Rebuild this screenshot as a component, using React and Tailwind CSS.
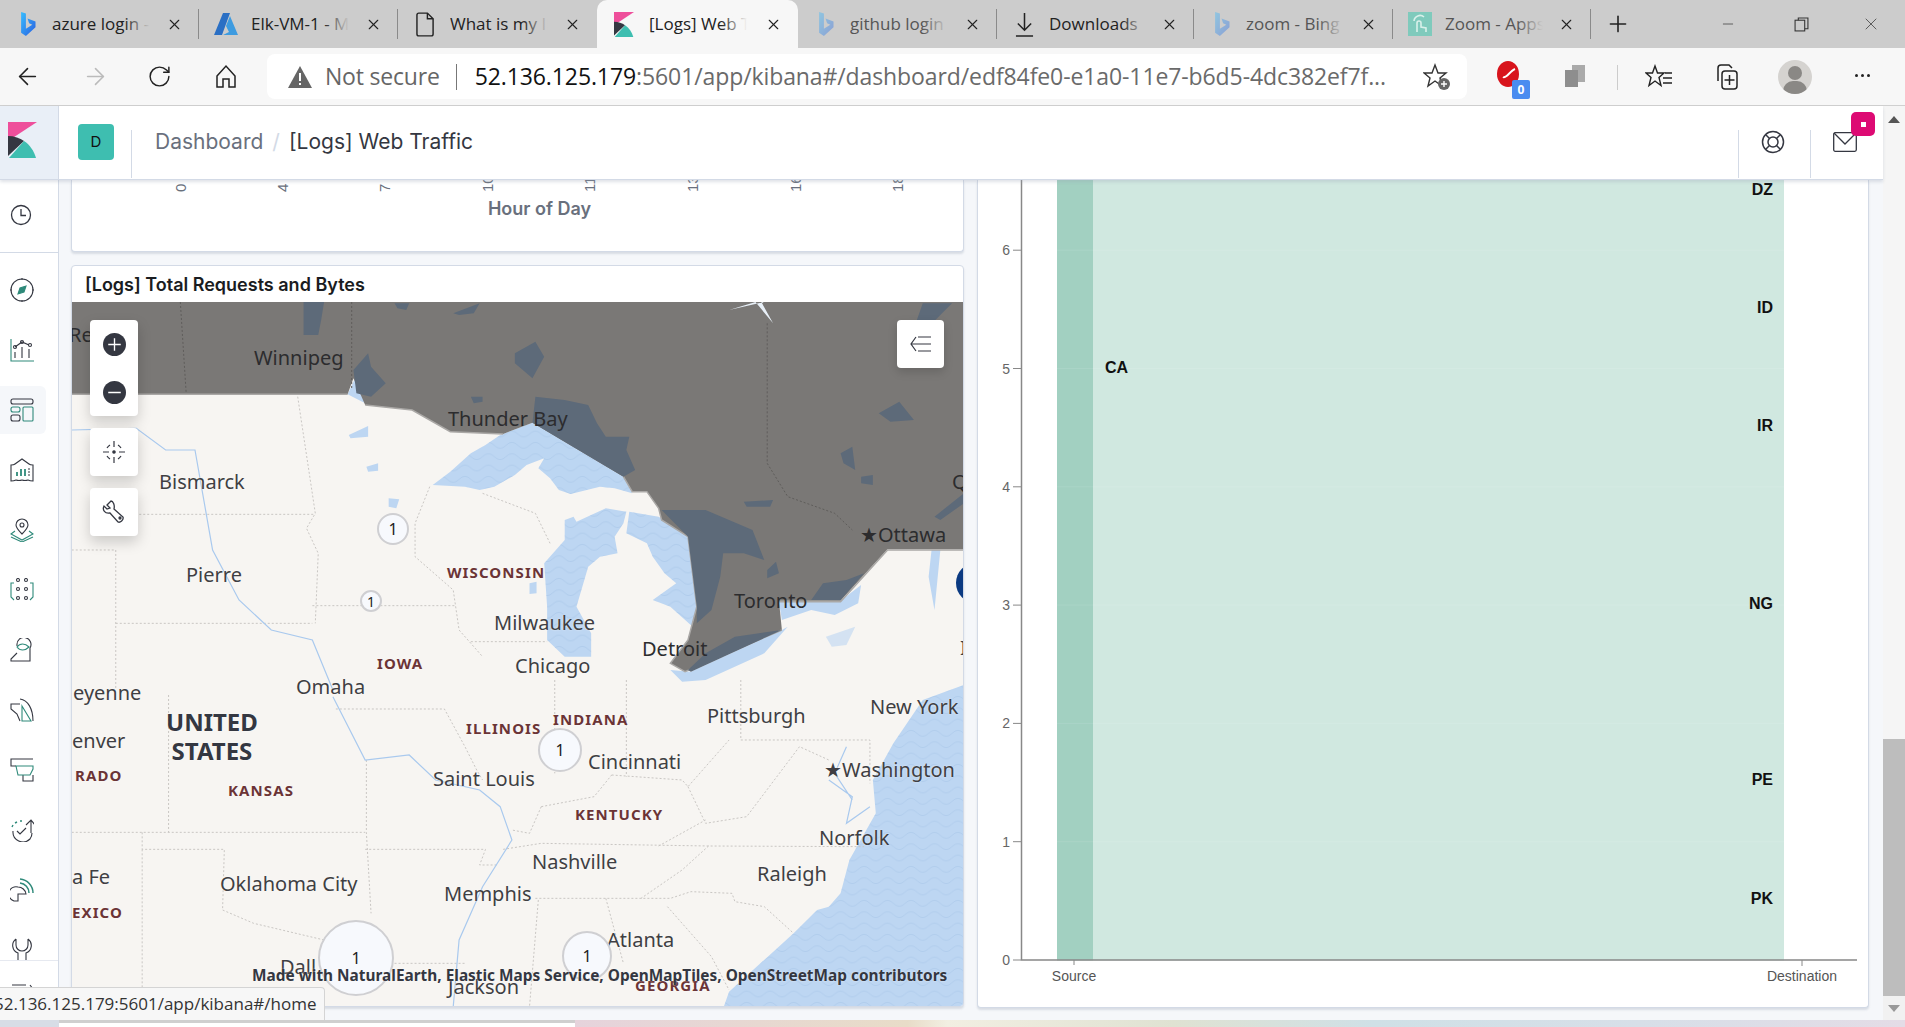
import React from "react";
import { ArrowLeft, ArrowRight, RotateCw, X, Plus, Minus } from "lucide-react";

const Bing = ({ dim }) => (
  <svg viewBox="0 0 20 30" className={"w-[17px] h-[24px] " + (dim ? "opacity-40" : "")}>
    <defs>
      <linearGradient id="bingg" x1="0" y1="0" x2="1" y2="1">
        <stop offset="0" stopColor="#37bdff" />
        <stop offset="1" stopColor="#2a5fe0" />
      </linearGradient>
    </defs>
    <path d="M2 0l6 2v19l8-5-4-2-2-6 10 4v7L8 30l-6-4z" fill="url(#bingg)" />
  </svg>
);
const Azure = () => (
  <svg viewBox="0 0 24 22" className="w-[24px] h-[22px]">
    <path d="M9 0h7L8 22H0z" fill="#2a6fc4" />
    <path d="M16 3l8 19H9l6-3-3-6z" fill="#3d9be0" />
  </svg>
);
const Doc = () => (
  <svg viewBox="0 0 20 26" className="w-[19px] h-[25px]" fill="none" stroke="#222" strokeWidth="1.5">
    <path d="M3 1h9l6 6v16a2 2 0 0 1-2 2H3a2 2 0 0 1-2-2V3a2 2 0 0 1 2-2z" />
    <path d="M12 1v6h6" />
  </svg>
);
const KibanaLogo = ({ cls }) => (
  <svg viewBox="0 0 29 36" className={cls}>
    <path d="M0 0h29L0 19z" fill="#ee4f9b" />
    <path d="M0 14c6 0 12 2 16 5L0 34z" fill="#343741" />
    <path d="M1 36l15-17c6 4 10 10 12 17z" fill="#3ebeb0" />
  </svg>
);
const Download = () => (
  <svg viewBox="0 0 20 26" className="w-[19px] h-[25px]" fill="none" stroke="#222" strokeWidth="1.6">
    <path d="M10 1v18M3 12l7 7 7-7M1 25h18" />
  </svg>
);
const ZoomTile = () => (
  <svg viewBox="0 0 24 24" className="w-[24px] h-[24px]">
    <rect width="24" height="24" fill="#7fcabc" />
    <path d="M9 20v-9a2 2 0 0 1 4 0v4l5 1v4M6 9a6 6 0 0 1 10-4" fill="none" stroke="#d9f0ea" strokeWidth="1.6" />
  </svg>
);

const tabs = [
  { icon: <Bing />, t: "azure login - Search", c: "text-[#222]", w: "w-[199px]" },
  { icon: <Azure />, t: "Elk-VM-1 - Microsoft", c: "text-[#222]", w: "w-[199px]" },
  { icon: <Doc />, t: "What is my IP address", c: "text-[#222]", w: "w-[199px]" },
  { icon: <KibanaLogo cls="w-[20px] h-[25px]" />, t: "[Logs] Web Traffic", c: "text-[#222]", w: "w-[201px]", active: true },
  { icon: <Bing dim />, t: "github login - Search", c: "text-[#555]", w: "w-[199px]" },
  { icon: <Download />, t: "Downloads", c: "text-[#222]", w: "w-[197px]" },
  { icon: <Bing dim />, t: "zoom - Bing search", c: "text-[#555]", w: "w-[199px]" },
  { icon: <ZoomTile />, t: "Zoom - Apps Store", c: "text-[#555]", w: "w-[198px]" },
];

function TabBar() {
  return (
    <div className="h-[48px] bg-[#cccccc] flex items-stretch shrink-0 font-['Open_Sans'] text-[17px]">
      {tabs.map((t, i) => (
        <div
          key={i}
          className={
            "relative flex items-center pl-[15px] pr-[16px] " +
            t.w +
            (t.active ? " bg-[#f7f7f7] rounded-t-[10px]" : " ")
          }
        >
          <span className="w-[24px] flex justify-center shrink-0">{t.icon}</span>
          <div className="relative ml-[13px] w-[98px] overflow-hidden whitespace-nowrap">
            <span className={t.c}>{t.t}</span>
            <span
              className={
                "absolute right-0 top-0 bottom-0 w-[26px] bg-gradient-to-r from-transparent " +
                (t.active ? "to-[#f7f7f7]" : "to-[#cccccc]")
              }
            />
          </div>
          <X size={17} strokeWidth={1.6} className="ml-auto text-[#222]" />
          {!t.active && i !== 2 && <span className="absolute right-0 top-[9px] h-[30px] w-px bg-[#8a8a8a]" />}
        </div>
      ))}
      <div className="w-[54px] flex items-center justify-center">
        <Plus size={26} strokeWidth={1.5} className="text-[#222]" />
      </div>
      <div className="flex-1 flex items-center justify-end text-[#444]">
        <Minus size={16} strokeWidth={1.2} className="mr-[58px]" />
        <svg viewBox="0 0 14 14" className="w-[15px] h-[15px] mr-[52px]" fill="none" stroke="#333" strokeWidth="1">
          <rect x="1" y="3" width="9" height="10" />
          <path d="M4 3V1h9v10h-3" />
        </svg>
        <X size={20} strokeWidth={1} className="mr-[24px]" />
      </div>
    </div>
  );
}

function Toolbar() {
  return (
    <div className="h-[58px] bg-[#f7f7f7] border-b border-[#d0d0d0] flex items-center shrink-0 relative font-['Open_Sans']">
      <ArrowLeft size={27} strokeWidth={1.4} className="ml-[14px] text-[#222]" />
      <ArrowRight size={27} strokeWidth={1.4} className="ml-[41px] text-[#bbb]" />
      <RotateCw size={25} strokeWidth={1.4} className="ml-[38px] text-[#222]" />
      <svg viewBox="0 0 24 26" className="w-[24px] h-[26px] ml-[42px]" fill="none" stroke="#222" strokeWidth="1.5">
        <path d="M3 12l9-10 9 10v11h-6v-8H9v8H3z" />
      </svg>
      <div className="ml-[29px] w-[1200px] h-[45px] bg-white rounded-[8px] flex items-center relative">
        <svg viewBox="0 0 26 24" className="w-[26px] h-[24px] ml-[20px]">
          <path d="M13 1l12 22H1z" fill="#666" />
          <rect x="12" y="8" width="2" height="8" fill="#fff" />
          <rect x="12" y="18" width="2" height="2" fill="#fff" />
        </svg>
        <span className="ml-[12px] text-[23px] tracking-[-0.2px] text-[#666] whitespace-nowrap">Not secure</span>
        <span className="ml-[16px] h-[26px] w-px bg-[#777]" />
        <span className="ml-[18px] text-[23px] tracking-[-0.1px] whitespace-nowrap">
          <span className="text-[#111]">52.136.125.179</span>
          <span className="text-[#6a6a6a]">:5601/app/kibana#/dashboard/edf84fe0-e1a0-11e7-b6d5-4dc382ef7f...</span>
        </span>
        <svg viewBox="0 0 28 28" className="w-[28px] h-[28px] absolute right-[16px] top-[9px]" fill="none" stroke="#333" strokeWidth="1.4">
          <path d="M12 2l3 8h8l-6 5 2 8-7-5-7 5 2-8-6-5h8z" />
          <circle cx="21" cy="21" r="6" fill="#666" stroke="none" />
          <path d="M21 18v6M18 21h6" stroke="#fff" />
        </svg>
      </div>
      <div className="absolute left-[1497px] top-[12px] w-[24px] h-[30px]">
        <svg viewBox="0 0 24 30" className="w-[24px] h-[30px]">
          <ellipse cx="11" cy="14" rx="11" ry="13" fill="#d8141c" />
          <path d="M6 17c3 2 7-6 12-8" stroke="#fff" strokeWidth="2" fill="none" />
        </svg>
        <span className="absolute left-[15px] top-[20px] w-[18px] h-[19px] bg-[#4a8cf0] rounded-[2px] text-white text-[12px] font-bold flex items-center justify-center">0</span>
      </div>
      <svg viewBox="0 0 22 24" className="absolute left-[1564px] top-[16px] w-[22px] h-[24px]">
        <rect x="8" y="1" width="13" height="17" fill="#aaa" />
        <rect x="1" y="6" width="13" height="17" fill="#8e8e8e" />
      </svg>
      <span className="absolute left-[1617px] top-[17px] h-[25px] w-px bg-[#ccc]" />
      <svg viewBox="0 0 28 26" className="absolute left-[1645px] top-[16px] w-[28px] h-[26px]" fill="none" stroke="#222" strokeWidth="1.4">
        <path d="M10 2l2.500 7H19l-5 4.500 2 8-6-4.500-6 4.500 2-8-5-4.500h6.500z" />
        <path d="M20 9h7M18 14h9M18 19h9" />
      </svg>
      <svg viewBox="0 0 26 28" className="absolute left-[1713px] top-[15px] w-[26px] h-[28px]" fill="none" stroke="#222" strokeWidth="1.5">
        <path d="M5 18V5a3 3 0 0 1 3-3h8l3 3" />
        <rect x="9" y="8" width="15" height="18" rx="3" />
        <path d="M16.500 12v10M11.500 17h10" />
      </svg>
      <div className="absolute left-[1778px] top-[12px] w-[34px] h-[34px] rounded-full bg-[#d5d3d0] overflow-hidden">
        <span className="absolute left-[10px] top-[6px] w-[14px] h-[14px] rounded-full bg-[#8a8885]" />
        <span className="absolute left-[5px] top-[21px] w-[24px] h-[20px] rounded-full bg-[#8a8885]" />
      </div>
      <span className="absolute left-[1855px] top-[26px] flex gap-[3px]">
        <i className="w-[3px] h-[3px] rounded-full bg-[#222]" />
        <i className="w-[3px] h-[3px] rounded-full bg-[#222]" />
        <i className="w-[3px] h-[3px] rounded-full bg-[#222]" />
      </span>
    </div>
  );
}

const D = "#343741";
const T = "#2f8a7a";
const NavIcon = ({ children }) => (
  <svg viewBox="0 0 24 24" className="w-[24px] h-[24px]" fill="none" strokeWidth="1.1" stroke={D}>
    {children}
  </svg>
);
const navIcons = [
  <NavIcon><circle cx="12" cy="12" r="11" /><path d="M12 0v2M12 22v2M0 12h2M22 12h2" /><path d="M16 8l-2 6-6 2 2-6z" stroke={T} fill={T} /></NavIcon>,
  <NavIcon><path d="M1 1v22h23" stroke={T} /><path d="M5 9l7-5 7 3M5 14v6M12 9v11M19 11v9" /><circle cx="5" cy="9" r="1.500" /><circle cx="12" cy="4" r="1.500" /><circle cx="20" cy="7" r="1.500" /></NavIcon>,
  <NavIcon><rect x="1" y="1" width="22" height="5" rx="2" /><rect x="1" y="9" width="9" height="5" rx="2" stroke={T} /><rect x="1" y="17" width="9" height="6" rx="2" /><rect x="13" y="9" width="10" height="14" rx="1" stroke={T} /></NavIcon>,
  <NavIcon><path d="M1 7q3 0 4-1l7-5 7 5q1 1 4 1v16q-3 0-5-1-3 1-6 0-3 1-6 0-2 1-5 1z" /><path d="M7 18v-4M11 18v-7M15 18v-7" stroke={T} strokeWidth="1.800" /><path d="M18 11h2M18 14h2M18 17h2" /></NavIcon>,
  <NavIcon><path d="M12 1a6 6 0 0 1 6 6c0 3-3 6-6 9-3-3-6-6-6-9a6 6 0 0 1 6-6z" /><circle cx="12" cy="7" r="2" /><path d="M5 13l-4 3 11 6 11-6-4-3M1 19l11 5 11-5" stroke={T} /></NavIcon>,
  <NavIcon><circle cx="8" cy="2" r="1.500" /><circle cx="16" cy="2" r="1.500" /><circle cx="8" cy="11" r="1.500" /><circle cx="16" cy="11" r="1.500" /><circle cx="8" cy="20" r="1.500" /><circle cx="16" cy="20" r="1.500" /><path d="M4 5H1v14l3 3M20 5h3v14l-3 3" stroke={T} /></NavIcon>,
  <NavIcon><path d="M7 8V7a7 7 0 1 1 13 3v13H1v-2l6-6" /><path d="M7 9c3-4 8-4 12 0-4 4-9 4-12 0z" stroke={T} /></NavIcon>,
  <NavIcon><path d="M10 6H1v5l6 5 3 7M10 1c8 1 13 10 13 22" /><path d="M12 8l9 15h-9z" stroke={T} /></NavIcon>,
  <NavIcon><path d="M23 1H1v7h5M13 17v6h10v-6" /><path d="M6 8h17v3l-3 6H8z" stroke={T} /></NavIcon>,
  <NavIcon><path d="M3 13a10 10 0 0 0 17 8 10 10 0 0 0 2-6M21 15V2M16 7l5-5 4 5M7 13l3 3 6-6" /><path d="M2 9l1-2M5 5l2-1M10 3h2" stroke={T} strokeWidth="1.400" /></NavIcon>,
  <NavIcon><path d="M8 9a7 7 0 0 0-4 14h4v-7h8a8 8 0 0 0-8-7z" /><path d="M10 1a14 14 0 0 1 13 14M10 5a10 10 0 0 1 9 10" stroke={T} strokeWidth="1.500" /></NavIcon>,
  <NavIcon><path d="M6 1a8 8 0 0 0 2 14v9M18 1a8 8 0 0 1-2 14v9M6 1v6a6 6 0 0 0 12 0V1" /></NavIcon>,
];

function Sidebar() {
  return (
    <div className="w-[59px] shrink-0 bg-white border-r border-[#d3dae6] flex flex-col overflow-hidden">
      <div className="h-[73px] border-b border-[#d3dae6] flex items-start justify-start pt-[23px] pl-[10px] shrink-0">
        <svg viewBox="0 0 24 24" className="w-[24px] h-[24px] ml-[-1px]" fill="none" stroke={D} strokeWidth="1.300">
          <circle cx="12" cy="12" r="9.500" />
          <path d="M12 6v6.500h5" />
        </svg>
      </div>
      <div className="pt-[7px] h-[707px] shrink-0 overflow-hidden flex flex-col">
        {navIcons.map((ic, i) => (
          <div key={i} className="h-[60px] shrink-0 flex items-center">
            <div
              className={
                "w-[46px] h-[48px] flex items-center pl-[10px] rounded-r-[6px] " + (i === 2 ? "bg-[#f5f7fa]" : "")
              }
            >
              {ic}
            </div>
          </div>
        ))}
      </div>
      <div className="border-t border-[#e6e9f0] pt-[23px] pl-[10px] shrink-0">
        <NavIcon><path d="M2 1h14M2 6h8M20 1l3 4-3 4" /></NavIcon>
      </div>
    </div>
  );
}

function KibanaHeader() {
  return (
    <div className="h-[74px] bg-white border-b border-[#d3dae6] shadow-[0_2px_3px_rgba(152,162,179,0.3)] flex items-stretch relative z-20 shrink-0 font-['Inter']">
      <div className="w-[59px] bg-[#e9eff7] border-r border-[#d3dae6] flex items-start pt-[16px] pl-[8px]">
        <KibanaLogo cls="w-[29px] h-[36px]" />
      </div>
      <div className="ml-[19px] mt-[18px] w-[36px] h-[36px] rounded-[4px] bg-[#3ebeb0] flex items-center justify-center text-[#111] text-[15px]">D</div>
      <span className="ml-[17px] mt-[24px] h-[48px] w-px bg-[#d3dae6]" />
      <div className="ml-[23px] h-[72px] flex items-center text-[21px] whitespace-nowrap">
        <span className="text-[#69707d]">Dashboard</span>
        <span className="mx-[9px] text-[#d3dae6]">/</span>
        <span className="text-[#343741]">[Logs] Web Traffic</span>
      </div>
      <div className="ml-auto flex items-stretch">
        <div className="mt-[24px] mb-[1px] w-[72px] border-l border-[#d3dae6] flex items-start justify-start pl-[22px]">
          <svg viewBox="0 0 24 24" className="w-[24px] h-[24px]" fill="none" stroke={D} strokeWidth="1.500">
            <circle cx="12" cy="12" r="10.500" />
            <circle cx="12" cy="12" r="5" />
            <path d="M4.500 4.500l4 4M19.500 4.500l-4 4M4.500 19.500l4-4M19.500 19.500l-4-4" />
          </svg>
        </div>
        <div className="mt-[24px] mb-[1px] w-[73px] border-l border-[#d3dae6] relative">
          <svg viewBox="0 0 24 20" className="absolute left-[22px] top-[2px] w-[24px] h-[20px]" fill="none" stroke={D} strokeWidth="1.300">
            <rect x="0.700" y="0.700" width="22.600" height="18.600" rx="1.500" />
            <path d="M1 1l11 11L23 1" />
          </svg>
        </div>
        <span className="absolute left-[1851px] top-[6px] w-[24px] h-[24px] rounded-[5px] bg-[#dd0a73] flex items-center justify-center">
          <i className="w-[5px] h-[5px] bg-white" />
        </span>
      </div>
    </div>
  );
}

const onDark = "text-[#2c2c2e] [text-shadow:none] ";
const onLand = "text-[#3f3f43] ";
const cities = [
  ["Re", onDark + "left-[-3px] top-[33px]"],
  ["Winnipeg", onDark + "left-[182px] top-[56px]"],
  ["Thunder Bay", onDark + "left-[376px] top-[117px]"],
  ["Bismarck", onLand + "left-[87px] top-[180px]"],
  ["Pierre", onLand + "left-[114px] top-[273px]"],
  ["★Ottawa", onDark + "left-[788px] top-[233px]"],
  ["Toronto", onDark + "left-[662px] top-[299px]"],
  ["Milwaukee", onLand + "left-[422px] top-[321px]"],
  ["Detroit", onDark + "left-[570px] top-[347px]"],
  ["Chicago", onLand + "left-[443px] top-[364px]"],
  ["Q", onDark + "left-[880px] top-[180px]"],
  ["I", onLand + "left-[888px] top-[346px]"],
  ["eyenne", onLand + "left-[1px] top-[391px]"],
  ["Omaha", onLand + "left-[224px] top-[385px]"],
  ["enver", onLand + "left-[0px] top-[439px]"],
  ["Pittsburgh", onLand + "left-[635px] top-[414px]"],
  ["New York", onLand + "left-[798px] top-[405px]"],
  ["Cincinnati", onLand + "left-[516px] top-[460px]"],
  ["Saint Louis", onLand + "left-[361px] top-[477px]"],
  ["★Washington", onLand + "left-[752px] top-[468px]"],
  ["Norfolk", onLand + "left-[747px] top-[536px]"],
  ["Nashville", onLand + "left-[460px] top-[560px]"],
  ["Raleigh", onLand + "left-[685px] top-[572px]"],
  ["Oklahoma City", onLand + "left-[148px] top-[582px]"],
  ["Memphis", onLand + "left-[372px] top-[592px]"],
  ["a Fe", onLand + "left-[0px] top-[575px]"],
  ["Atlanta", onLand + "left-[535px] top-[638px]"],
  ["Dall", onLand + "left-[208px] top-[665px]"],
  ["Jackson", onLand + "left-[376px] top-[685px]"],
];
const states = [
  ["WISCONSIN", "left-[375px] top-[270px]"],
  ["IOWA", "left-[305px] top-[361px]"],
  ["RADO", "left-[3px] top-[473px]"],
  ["KANSAS", "left-[156px] top-[488px]"],
  ["ILLINOIS", "left-[394px] top-[426px]"],
  ["INDIANA", "left-[481px] top-[417px]"],
  ["KENTUCKY", "left-[503px] top-[512px]"],
  ["EXICO", "left-[0px] top-[610px]"],
  ["GEORGIA", "left-[563px] top-[683px]"],
];
const clusters = [
  ["left-[305px] top-[211px] w-[32px] h-[32px] text-[16px]"],
  ["left-[288px] top-[288px] w-[22px] h-[22px] text-[14px]"],
  ["left-[466px] top-[426px] w-[44px] h-[44px] text-[16px]"],
  ["left-[246px] top-[618px] w-[76px] h-[76px] text-[16px]"],
  ["left-[490px] top-[629px] w-[50px] h-[50px] text-[16px]"],
];

const Z5 = "translate(60 290) scale(0.5869 0.33333)";
const Z6 = "translate(60 680) scale(0.5869 0.33333)";
const ns = { vectorEffect: "non-scaling-stroke" };

function MapArt() {
  const lakeL = "#bdd6f2";
  const lakeD = "#5d6a79";
  const superior = "M635 585L665 545 700 490 725 465 750 435 805 398 960 560 975 610 945 595 920 590 870 612 850 600 835 565 815 535 825 505 795 525 775 555 740 590 715 600 690 590z";
  const michigan = "M860 690L875 680 880 695 930 655 965 665 960 700 945 740 950 790 920 800 900 830 880 950 905 1030 905 1100 860 1100 830 1050 830 950 825 820 860 750z";
  const huron = "M970 665L1020 680 1070 740 1085 950 1078 1010 1040 950 1010 930 1050 880 1030 850 1010 800 1000 760 965 730z";
  const erie = "M1040 1140L1075 1145 1230 1020 1240 1010 1200 1090 1100 1170 1060 1175z";
  const ontario = "M1225 935L1330 932 1365 885 1360 940 1320 975 1280 960 1230 990z";
  return (
    <svg viewBox="72 302 892 705" className="absolute left-0 top-0 w-[892px] h-[705px]">
      <defs>
        <pattern id="wave" width="40" height="34" patternUnits="userSpaceOnUse">
          <path d="M0 24q10-18 20 0t20 0" fill="none" stroke="#a3c2e6" strokeWidth="1.500" />
        </pattern>
      </defs>
      <rect x="72" y="302" width="892" height="705" fill="#f7f5f2" />
      <g transform={Z6}>
        <path d="M1130 985L1140 935 1250 760 1290 690 1310 680 1330 640 1345 540 1390 400 1385 300 1420 190 1470 60 1540 15V985z" fill={lakeL} />
        <path d="M1130 985L1140 935 1250 760 1290 690 1310 680 1330 640 1345 540 1390 400 1385 300 1420 190 1470 60 1540 15V985z" fill="url(#wave)" opacity="0.7" />
        <path style={ns} d="M20 457H520M140 457V508H280L277 690 330 730 450 780M185 45V457M140 508V985M470 87H655L690 200 710 270 720 300M522 240V457L530 700M520 508H725L715 555H745M755 508L820 490 1105 498 1370 500M1105 498L1060 570 990 655M810 655H1040L1075 635 1145 640 1150 665 1200 680 1250 760M1035 680L1110 830 1140 930M815 660L800 980M930 655L960 850M843 0V280M965 0V290M1160 0V180H1380V310M940 285L1060 300 1070 320 1140 180M820 380L910 350 940 285M820 380L800 460 770 450M1070 320L1100 430 1170 410 1260 200 1310 240M1020 498L1100 420M570 850H690" fill="none" stroke="#c9c6c3" strokeWidth="1" strokeDasharray="2 2" />
        <path style={ns} d="M465 50L520 240 595 225 640 300 715 330 750 380 770 480 720 620 680 780 670 980" fill="none" stroke="#a9c9ee" strokeWidth="1.200" />
        <path style={ns} d="M1310 300L1350 350 1340 430 1380 380M1340 200L1320 280 1350 360" fill="none" stroke="#a9c9ee" strokeWidth="1.200" />
      </g>
      <g transform={Z5}>
        <g fill={lakeL}>
          <path d={superior} /><path d={michigan} /><path d={huron} /><path d={erie} /><path d={ontario} />
          <path d="M490 313L503 265 520 340zM492 435L525 408 525 440 495 445zM522 530L542 520 542 542 525 545zM560 625L578 628 573 655 560 650zM800 880L812 875 812 910 800 912zM1485 780L1500 780 1490 960 1480 860z" />
          <path d="M1305 1040L1355 1010 1340 1065 1315 1070z" opacity="0.6" />
        </g>
        <g fill="url(#wave)" opacity="0.7">
          <path d={superior} /><path d={michigan} /><path d={huron} />
        </g>
        <path style={ns} d="M405 320L435 670 420 715 440 790 435 1000M135 673H435M95 1000H430M430 947H672M630 590L605 700V800L670 900 680 1020 720 1100M700 1055H830M720 610L810 670 835 760M20 780H95V1200" fill="none" stroke="#c9c6c3" strokeWidth="1" strokeDasharray="2 2" />
        <path style={ns} d="M20 420L130 415 180 480 230 480 260 780 305 930 360 1020 430 1050 465 1200" fill="none" stroke="#a9c9ee" strokeWidth="1.200" />
        <path d="M20 36H1540V778H1410L1330 932H1225L1230 1020 1065 1145 1040 1120 1070 1050 1085 950 1070 740 1025 690 1020 655 1000 605 975 605 960 560 805 398 755 432 665 425 600 360 520 345 500 265 490 313H20z" fill="#7a7876" />
        <path style={ns} d="M20 313H490M520 345L600 360 665 425 755 432M960 560L975 605 1000 605 1020 655 1025 690 1070 740 1085 950 1070 1050 1040 1120 1065 1145 1230 1020M1225 935H1330L1410 780H1540" fill="none" stroke="#aaa8a6" strokeWidth="1.500" />
        <g fill={lakeD}>
          <path d="M810 320L860 330 900 345 915 400 930 440 970 440 965 480 980 540 960 560 805 398z" />
          <path d="M1025 660L1100 660 1140 690 1180 720 1200 810 1165 790 1130 790 1125 860 1110 960 1085 1000 1085 950 1070 740z" />
          <path d="M1070 1140L1100 1090 1150 1040 1230 1020 1075 1145z" />
          <path d="M1280 930H1330L1370 850 1340 870 1300 880z" />
          <path d="M415 36H450L445 90 440 135H415zM670 70L715 40 705 70 680 75zM500 240L525 190 530 230 555 280 530 320 505 310zM775 190L810 155 825 200 805 265 775 220zM700 320H720L720 335 705 340zM1395 370L1430 335 1455 390 1415 395zM1330 490L1350 470 1355 540 1335 520zM1365 560L1385 555 1385 585 1365 580zM1165 635L1215 630 1210 650 1170 650zM1205 840L1220 815 1225 850 1205 865zM1470 40L1520 40 1480 110 1460 90zM1490 680L1540 610 1540 640 1500 690zM570 40H595L590 60 575 55z" />
        </g>
        <path style={ns} d="M205 36L215 310M497 36V300M1205 100V520L1240 620 1320 670 1350 720" fill="none" stroke="#5f5d5b" strokeWidth="1" strokeDasharray="2 2" />
        <path d="M1140 60L1185 36 1215 100 1195 36H1240L1200 36z" fill="#e8f0f8" />
      </g>
    </svg>
  );
}

function MapPanel() {
  return (
    <div className="mt-[13px] h-[742px] shrink-0 bg-white border border-[#d3dae6] rounded-[4px] shadow-[0_2px_2px_rgba(152,162,179,0.3)] flex flex-col overflow-hidden">
      <div className="h-[36px] shrink-0 pl-[13px] flex items-center font-['Inter'] font-semibold text-[18px] text-[#1a1c21]">
        [Logs] Total Requests and Bytes
      </div>
      <div className="relative flex-1 overflow-hidden font-['Noto_Sans'] [text-shadow:0_0_2px_rgba(255,255,255,0.7)]">
        <MapArt />
        {cities.map(([t, c]) => (
          <span key={t} className={"absolute -translate-y-1/2 text-[20px] leading-none whitespace-nowrap " + c}>{t}</span>
        ))}
        {states.map(([t, c]) => (
          <span key={t} className={"absolute -translate-y-1/2 text-[15px] leading-none font-bold tracking-[1.1px] whitespace-nowrap text-[#6b3436] " + c}>{t}</span>
        ))}
        <span className="absolute left-[94px] top-[434px] -translate-y-1/2 text-[24px] leading-[29px] font-bold text-center text-[#343741]">
          UNITED<br />STATES
        </span>
        {clusters.map(([c], i) => (
          <span key={i} className={"absolute rounded-full bg-[#f7f9fd] border-2 border-[#cfcfd2] flex items-center justify-center text-[#222] " + c}>1</span>
        ))}
        <span className="absolute left-[884px] top-[261px] w-[40px] h-[40px] rounded-full bg-[#0b3a82]" />
        <span className="absolute left-[180px] top-[674px] -translate-y-1/2 text-[15.400px] leading-none font-bold whitespace-nowrap text-[#343741]">
          Made with NaturalEarth, Elastic Maps Service, OpenMapTiles, OpenStreetMap contributors
        </span>

        <div className="absolute left-[18px] top-[18px] flex flex-col gap-[12px]">
          <div className="w-[48px] h-[96px] bg-white rounded-[4px] shadow-[0_6px_14px_rgba(0,0,0,0.18)] flex flex-col items-center justify-center gap-[25px]">
            <svg viewBox="0 0 22 22" className="w-[23px] h-[23px]"><circle cx="11" cy="11" r="11" fill={D} /><path d="M11 5v12M5 11h12" stroke="#fff" strokeWidth="1.300" /></svg>
            <svg viewBox="0 0 22 22" className="w-[23px] h-[23px]"><circle cx="11" cy="11" r="11" fill={D} /><path d="M5 11h12" stroke="#fff" strokeWidth="1.300" /></svg>
          </div>
          <div className="w-[48px] h-[48px] bg-white rounded-[4px] shadow-[0_6px_14px_rgba(0,0,0,0.18)] flex items-center justify-center">
            <svg viewBox="0 0 22 22" className="w-[22px] h-[22px]" fill="none" stroke={D} strokeWidth="1.200">
              <path d="M11 0v6M11 16v6M0 11h6M16 11h6" />
              <path d="M4 7a8.500 8.500 0 0 1 3-3M15 4a8.500 8.500 0 0 1 3 3M18 15a8.500 8.500 0 0 1-3 3M7 18a8.500 8.500 0 0 1-3-3" />
              <circle cx="11" cy="11" r="1.200" fill={D} />
            </svg>
          </div>
          <div className="w-[48px] h-[48px] bg-white rounded-[4px] shadow-[0_6px_14px_rgba(0,0,0,0.18)] flex items-center justify-center">
            <svg viewBox="0 0 24 24" className="w-[24px] h-[24px]" fill="none" stroke={D} strokeWidth="1.300">
              <path d="M9 1L5 5l3 3-3 1-3-3C0 10 3 14 8 13l8 9c2 1 6-2 5-5l-9-8c1-4-1-8-3-8z" />
              <circle cx="18" cy="18" r="1" fill={D} />
            </svg>
          </div>
        </div>
        <div className="absolute left-[825px] top-[18px] w-[47px] h-[48px] bg-white rounded-[4px] shadow-[0_4px_10px_rgba(0,0,0,0.15)] flex items-center justify-center">
          <svg viewBox="0 0 22 16" className="w-[22px] h-[16px]" fill="none" stroke={D} strokeWidth="1.200">
            <path d="M6 1L1 8l5 7M1 8h20M8 1h13M8 15h13" />
          </svg>
        </div>
      </div>
    </div>
  );
}

function Sankey() {
  const yTicks = [6, 5, 4, 3, 2, 1, 0];
  const labels = [["DZ", 189], ["ID", 307], ["IR", 425], ["NG", 603], ["PE", 779], ["PK", 898]];
  const tickY = (v) => 960 - v * 118.3;
  return (
    <svg viewBox="978 180 892 828" className="w-[892px] h-[828px] font-['Liberation_Sans']">
      <rect x="1057" y="180" width="36" height="780" fill="#a2d0c1" />
      <rect x="1093" y="180" width="691" height="780" fill="#d0e8e0" />
      {yTicks.map((v) => (
        <g key={v}>
          <path d={`M1057 ${tickY(v)}H1093`} stroke="#aad4c7" strokeWidth="1" />
          <path d={`M1093 ${tickY(v)}H1784`} stroke="#d4eae3" strokeWidth="1" />
          <path d={`M1013 ${tickY(v)}H1021`} stroke="#888" strokeWidth="1" />
          <text x="1010" y={tickY(v) + 5} textAnchor="end" fontSize="14" fill="#666">{v}</text>
        </g>
      ))}
      <path d="M1021.500 180V960H1857" fill="none" stroke="#888" strokeWidth="1.500" />
      <path d="M1074 960v5M1802 960v6" stroke="#888" strokeWidth="1" />
      <text x="1074" y="981" textAnchor="middle" fontSize="14" fill="#555">Source</text>
      <text x="1802" y="981" textAnchor="middle" fontSize="14" fill="#555">Destination</text>
      <text x="1105" y="373" fontSize="16" fontWeight="700" fill="#111">CA</text>
      {labels.map(([t, y]) => (
        <text key={t} x="1773" y={y + 6} textAnchor="end" fontSize="16" fontWeight="700" fill="#111">{t}</text>
      ))}
    </svg>
  );
}

function TopPanel() {
  const ticks = [["0", 180], ["4", 282], ["7", 384], ["10", 487], ["11", 589], ["13", 692], ["16", 795], ["18", 897]];
  return (
    <div className="h-[72px] shrink-0 bg-white border border-t-0 border-[#d3dae6] rounded-b-[4px] shadow-[0_2px_2px_rgba(152,162,179,0.3)] relative overflow-hidden">
      <svg viewBox="71 180 893 14" className="w-[893px] h-[14px] block font-['Liberation_Sans']">
        {ticks.map(([t, x]) => (
          <text key={t} transform={`rotate(-90 ${x + 5} 192)`} x={x + 5} y="192" textAnchor="start" fontSize="15" fill="#69707d">{t}</text>
        ))}
      </svg>
      <p className="mt-[4px] text-center text-[18px] font-semibold font-['Inter'] text-[#69707d] pl-[44px] leading-[22px]">Hour of Day</p>
    </div>
  );
}

export default function App() {
  return (
    <div className="w-[1905px] h-[1027px] overflow-hidden flex flex-col bg-white relative">
      <TabBar />
      <Toolbar />
      <div className="flex flex-1 min-h-0">
        <div className="flex-1 min-w-0 flex flex-col">
          <KibanaHeader />
          <div className="flex flex-1 min-h-0 bg-[#f5f7fa]">
            <Sidebar />
            <div className="flex gap-[13px] pl-[12px] pr-[14px] flex-1 min-w-0 overflow-hidden">
              <div className="w-[893px] shrink-0 flex flex-col">
                <TopPanel />
                <MapPanel />
              </div>
              <div className="w-[892px] shrink-0 h-[828px] bg-white border border-t-0 border-[#d3dae6] rounded-b-[4px] shadow-[0_2px_2px_rgba(152,162,179,0.3)] overflow-hidden">
                <Sankey />
              </div>
            </div>
          </div>
        </div>
        <div className="w-[22px] shrink-0 bg-[#f1f1f1] flex flex-col items-center">
          <div className="h-[633px] w-full flex justify-center pt-[10px] bg-[#f5f5f5]">
            <span className="w-0 h-0 border-x-[6px] border-x-transparent border-b-[7px] border-b-[#555]" />
          </div>
          <div className="h-[257px] w-full bg-[#bdbdbd]" />
          <div className="w-full flex justify-center pt-[9px]">
            <span className="w-0 h-0 border-x-[6px] border-x-transparent border-t-[7px] border-t-[#999]" />
          </div>
        </div>
      </div>
      <div className="h-[7px] shrink-0 flex">
        <div className="w-[59px] bg-[#d7dde6]" />
        <div className="w-[516px] bg-white border-t-[3px] border-[#cfcfcf]" />
        <div className="flex-1 bg-[linear-gradient(90deg,#e6d3dc,#e8dcc8_25%,#f2efe2_28%,#dfe2d2_45%,#cfe0e6_60%,#d7dfe8_80%,#e4dce6)]" />
      </div>
      <div className="absolute left-0 bottom-[7px] w-[325px] h-[33px] bg-[#f7f7f7] border border-l-0 border-b-0 border-[#d4d4d4] rounded-tr-[4px] overflow-hidden z-30 flex items-center font-['Open_Sans'] text-[17px] text-[#333] whitespace-nowrap">
        <span className="ml-[-6px]">52.136.125.179:5601/app/kibana#/home</span>
      </div>
    </div>
  );
}
